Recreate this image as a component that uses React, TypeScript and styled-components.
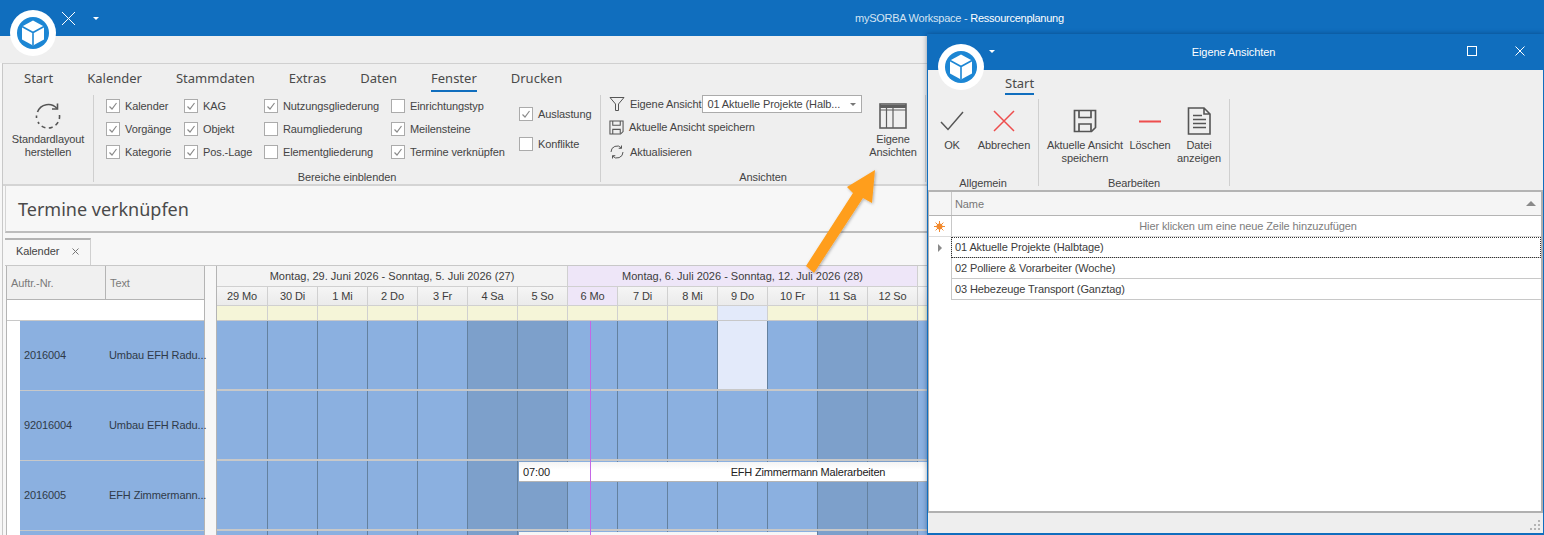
import React from "react"
import styled, { createGlobalStyle } from "styled-components"

const GlobalStyle = createGlobalStyle`
  html, body {
    margin: 0;
    padding: 0;
    background: #f7f7f7;
  }
  * {
    box-sizing: border-box;
  }
`

const Screen = styled.div`
  position: relative;
  width: 1544px;
  height: 535px;
  overflow: hidden;
  background: #f7f7f7;
  color: #444;
  font-family: "Liberation Sans", Arial, sans-serif;
  font-size: 11px;
  letter-spacing: -0.1px;
`

const TitleBar = styled.div`
  display: flex;
  align-items: center;
  height: 36px;
  padding-left: 61px;
  background: #106ebe;
  color: #fff;
`

const QuickButtons = styled.div`
  display: flex;
  align-items: center;
  gap: 17px;
`

const Caret = styled.span<{ $color?: string }>`
  width: 0;
  height: 0;
  border-left: 3.5px solid transparent;
  border-right: 3.5px solid transparent;
  border-top: 3.5px solid ${(p) => p.$color || "#fff"};
`

const AppTitle = styled.div`
  margin-left: 756px;
  white-space: nowrap;
  letter-spacing: -0.25px;
  color: #d4e4f3;
`

const AppTitleStrong = styled.span`
  color: #fff;
`

const LogoBadge = styled.div<{ $left: number; $top: number }>`
  position: absolute;
  left: ${(p) => p.$left}px;
  top: ${(p) => p.$top}px;
  width: 46px;
  height: 46px;
`

const Workspace = styled.div`
  border-left: 2px solid #f7f7f7;
`

const LogoStrip = styled.div`
  height: 27px;
  margin-left: -2px;
  background: #efefef;
`

const Frame = styled.div`
  border-left: 1px solid #c8c8c8;
  border-top: 1px solid #d0d0d0;
  padding-left: 2px;
`

const Ribbon = styled.div`
  height: 122px;
  margin-left: -2px;
  background: #efefef;
  border-bottom: 2px solid #d4d4d4;
`

const TabRow = styled.div`
  display: flex;
  gap: 34px;
  height: 29px;
  padding: 5px 0 0 21px;
  font-family: "Noto Sans", sans-serif;
  font-size: 13px;
  letter-spacing: 0;
  color: #4a4a4a;
`

const RibbonTab = styled.div<{ $active?: boolean }>`
  height: 23px;
  line-height: 19px;
  border-bottom: ${(p) => (p.$active ? "2px solid #106ebe" : "none")};
`

const RibbonBody = styled.div`
  display: flex;
  height: 89px;
`

const Group = styled.div<{ $width: number }>`
  display: flex;
  flex-direction: column;
  width: ${(p) => p.$width}px;
  height: 87px;
  margin-top: 2px;
  border-right: 1px solid #cfcfcf;
`

const GroupContent = styled.div<{ $pad?: number }>`
  display: flex;
  flex: none;
  height: 76px;
  padding-left: ${(p) => p.$pad || 0}px;
`

const GroupCaption = styled.div`
  height: 11px;
  text-align: center;
  line-height: 13px;
`

const BigButton = styled.div<{ $width: number }>`
  display: flex;
  flex-direction: column;
  align-items: center;
  width: ${(p) => p.$width}px;
  padding-top: 4px;
  line-height: 13px;
  text-align: center;
`

const BigIcon = styled.div<{ $height: number }>`
  display: flex;
  align-items: center;
  justify-content: center;
  height: ${(p) => p.$height}px;
`

const CheckColumn = styled.div<{ $width: number; $gap: number; $top: number }>`
  display: flex;
  flex-direction: column;
  gap: ${(p) => p.$gap}px;
  width: ${(p) => p.$width}px;
  padding-top: ${(p) => p.$top}px;
`

const CheckRow = styled.div`
  display: flex;
  align-items: center;
  gap: 5px;
  height: 14px;
  white-space: nowrap;
`

const Box = styled.span`
  display: flex;
  align-items: center;
  justify-content: center;
  width: 14px;
  height: 14px;
  background: #fff;
  border: 1px solid #ababab;
`

const ViewColumn = styled.div`
  display: flex;
  flex-direction: column;
  width: 262px;
  padding-left: 8px;
`

const ViewRow = styled.div<{ $height: number }>`
  display: flex;
  align-items: center;
  gap: 5px;
  height: ${(p) => p.$height}px;
  white-space: nowrap;
`

const Combo = styled.div`
  display: flex;
  align-items: center;
  justify-content: space-between;
  width: 160px;
  height: 18px;
  margin-left: -4px;
  padding: 0 5px 0 4px;
  background: #fff;
  border: 1px solid #ababab;
`

const Heading = styled.div`
  display: flex;
  align-items: center;
  height: 47px;
  padding-left: 12px;
  background: #f7f7f7;
  border-bottom: 2px solid #bdbdbd;
  border-left: 1px solid #d4d4d4;
  font-family: "Noto Sans", sans-serif;
  font-size: 18px;
  letter-spacing: 0;
  color: #4a4a4a;
`

const DocTabs = styled.div`
  display: flex;
  align-items: flex-end;
  height: 32px;
`

const DocTab = styled.div`
  display: flex;
  align-items: center;
  justify-content: space-between;
  width: 86px;
  height: 27px;
  padding: 0 11px 3px 11px;
  background: #f7f7f7;
  border-top: 2px solid #b4b4b4;
  border-right: 1px solid #d0d0d0;
`

const CalendarArea = styled.div`
  display: flex;
  gap: 11px;
  padding-left: 1px;
  border-top: 1px solid #c8c8c8;
`

const LeftTable = styled.div`
  width: 199px;
  flex: none;
  border-left: 1px solid #b4b4b4;
  border-right: 1px solid #b4b4b4;
`

const LeftHead = styled.div`
  display: grid;
  grid-template-columns: 98px 1fr;
  height: 34px;
  background: #f0f0f0;
  border-bottom: 1px solid #b4b4b4;
  color: #7a7a7a;
`

const LeftHeadCell = styled.div`
  display: flex;
  align-items: center;
  padding-left: 4px;
  & + & {
    border-left: 1px solid #b4b4b4;
  }
`

const LeftBlank = styled.div`
  height: 21px;
  background: #fff;
  border-bottom: 1px solid #c8c8c8;
`

const LeftRow = styled.div`
  display: grid;
  grid-template-columns: 85px 1fr;
  align-items: center;
  height: 70px;
  margin-left: 13px;
  padding: 0 0 2px 4px;
  background: #8bb0e0;
  border-bottom: 1px solid #c8c8c8;
  color: #2f3a48;
  box-shadow: -13px 0 0 #fff;
  white-space: nowrap;
`

const Gantt = styled.div`
  flex: none;
  width: 761px;
  border-left: 1px solid #b4b4b4;
`

const WeekRow = styled.div`
  display: grid;
  grid-template-columns: 351px 350px 60px;
  height: 21px;
`

const WeekCell = styled.div<{ $active?: boolean }>`
  display: flex;
  align-items: center;
  justify-content: center;
  background: ${(p) => (p.$active ? "#eee6f8" : "#f3f3f3")};
  border-bottom: 1px solid #d0d0d0;
  border-right: 1px solid #d0d0d0;
  color: #3c3c3c;
  letter-spacing: 0;
  white-space: nowrap;
`

const DayGrid = styled.div`
  display: grid;
  grid-template-columns: 51px repeat(14, 50px);
`

const DayCell = styled.div<{ $active?: boolean }>`
  display: flex;
  align-items: center;
  justify-content: center;
  height: 19px;
  background: ${(p) =>
    p.$active ? "#eee6f8" : "linear-gradient(#f5f5f5, #ebebeb)"};
  border-right: 1px solid #d0d0d0;
  border-bottom: 1px solid #d0d0d0;
  color: #3c3c3c;
`

const StripCell = styled.div<{ $today?: boolean }>`
  height: 15px;
  background: ${(p) => (p.$today ? "#e3eafa" : "#f5f5d8")};
  border-right: 1px solid #d0d0d0;
  border-bottom: 1px solid #c8c8c8;
`

const GanttRow = styled.div`
  position: relative;
  display: grid;
  grid-template-columns: 51px repeat(14, 50px);
  height: 70px;
  border-bottom: 2px solid #c8c8c8;
`

const GanttCell = styled.div<{ $weekend?: boolean; $today?: boolean }>`
  background: ${(p) =>
    p.$today ? "#e3eafa" : p.$weekend ? "#7da0cb" : "#8bb0e0"};
  border-right: 1px solid #64819f;
`

const NowLine = styled.div`
  position: absolute;
  top: 0;
  bottom: -2px;
  left: 373px;
  width: 1px;
  background: #c467e6;
  z-index: 2;
`

const Appointment = styled.div<{ $width: number }>`
  position: absolute;
  left: 302px;
  top: 1px;
  display: grid;
  grid-template-columns: 60px 1fr 60px;
  align-items: center;
  width: ${(p) => p.$width}px;
  height: 20px;
  padding-left: 4px;
  background: linear-gradient(#f4f4f4, #fff 40%);
  border-bottom: 1px solid #b4b4b4;
  color: #222;
  z-index: 1;
`

const AppointmentTitle = styled.span`
  text-align: center;
  white-space: nowrap;
  letter-spacing: -0.2px;
`

const ArrowLayer = styled.svg`
  position: absolute;
  left: 790px;
  top: 160px;
  z-index: 5;
`

const DialogWindow = styled.div`
  position: absolute;
  left: 927px;
  top: 34px;
  width: 617px;
  height: 501px;
  display: flex;
  flex-direction: column;
  background: #fff;
  border-left: 1px solid #106ebe;
  border-right: 1px solid #106ebe;
  border-bottom: 2px solid #106ebe;
  box-shadow: 0 0 5px rgba(0, 30, 70, 0.45);
  z-index: 6;
`

const DialogTitle = styled.div`
  position: relative;
  display: flex;
  align-items: center;
  justify-content: center;
  height: 36px;
  padding-right: 4px;
  background: #106ebe;
  color: #fff;
  flex: none;
`

const DialogControl = styled.div<{ $right: number }>`
  position: absolute;
  right: ${(p) => p.$right}px;
  top: 12px;
  display: flex;
`

const DialogQuickCaret = styled.div`
  position: absolute;
  left: 61px;
  top: 16px;
  display: flex;
`

const DialogRibbon = styled.div`
  height: 122px;
  flex: none;
  background: #efefef;
  border-bottom: 2px solid #b4b4b4;
`

const DialogTabRow = styled.div`
  height: 25px;
  padding: 4px 0 0 77px;
  font-family: "Noto Sans", sans-serif;
  font-size: 13px;
  letter-spacing: 0;
`

const DialogTab = styled.div`
  display: inline-block;
  height: 21px;
  line-height: 19px;
  border-bottom: 2px solid #106ebe;
  color: #4a4a4a;
`

const DialogGroups = styled.div`
  display: flex;
  height: 87px;
  margin-top: 4px;
`

const DialogGroup = styled.div<{ $width: number }>`
  display: flex;
  flex-direction: column;
  width: ${(p) => p.$width}px;
  border-right: 1px solid #cfcfcf;
`

const DialogButtons = styled.div<{ $pad?: number }>`
  display: flex;
  flex: none;
  height: 78px;
  padding-left: ${(p) => p.$pad || 0}px;
`

const DialogCaption = styled.div`
  height: 9px;
  text-align: center;
  line-height: 13px;
`

const GridPane = styled.div`
  display: flex;
  flex-direction: column;
  flex: 1;
  background: #fff;
  border-left: 1px solid #b0b0b0;
  border-right: 2px solid #b0b0b0;
  border-bottom: 2px solid #b0b0b0;
`

const DialogHead = styled.div`
  display: grid;
  grid-template-columns: 22px 1fr;
  height: 24px;
  flex: none;
  background: #f5f5f5;
  border-bottom: 1px solid #b4b4b4;
  color: #777;
`

const HeadCell = styled.div`
  position: relative;
  display: flex;
  align-items: center;
  padding-left: 3px;
  border-left: 1px solid #c8c8c8;
  &:first-child {
    border-left: none;
  }
`

const SortMark = styled.span`
  position: absolute;
  right: 5px;
  top: 9px;
  border-left: 5px solid transparent;
  border-right: 5px solid transparent;
  border-bottom: 5px solid #8a8a8a;
`

const DialogRow = styled.div<{ $hint?: boolean }>`
  display: grid;
  grid-template-columns: 22px 1fr;
  height: 21px;
  flex: none;
  border-bottom: ${(p) => (p.$hint ? "1px solid #dcdcdc" : "none")};
  color: ${(p) => (p.$hint ? "#7d7d7d" : "#3c3c3c")};
`

const RowMark = styled.div`
  display: flex;
  align-items: center;
  justify-content: center;
  padding-right: 1px;
`

const RowPointer = styled.span`
  border-top: 4px solid transparent;
  border-bottom: 4px solid transparent;
  border-left: 4px solid #8a8a8a;
`

const RowText = styled.div<{ $focus?: boolean; $hint?: boolean }>`
  display: flex;
  align-items: center;
  justify-content: ${(p) => (p.$hint ? "center" : "flex-start")};
  padding: 0 0 ${(p) => (p.$focus ? 1 : 0)}px 3px;
  border-left: 1px solid #c8c8c8;
  border-bottom: ${(p) => (p.$hint ? "none" : "1px solid #c8c8c8")};
  outline: ${(p) => (p.$focus ? "1px dotted #333" : "none")};
  outline-offset: -1px;
  white-space: nowrap;
`

const StatusBar = styled.div`
  position: relative;
  height: 20px;
  flex: none;
  background: #eeeeee;
`

const Grip = styled.svg`
  position: absolute;
  right: 3px;
  bottom: 3px;
`

const Logo = () => (
  <svg width="46" height="46" viewBox="0 0 46 46">
    <circle cx="23" cy="23" r="23" fill="#fff" />
    <circle cx="23" cy="23" r="16" fill="#1c86d4" />
    <path d="M23 10.5 34 16.5 V29.5 L23 35.5 12 29.5 V16.5 Z" fill="#fff" />
    <path
      d="M12 16.5 23 22.5 34 16.5 M23 22.5 V35.5"
      fill="none"
      stroke="#1c86d4"
      strokeWidth="1.6"
    />
  </svg>
)

const Tick = () => (
  <svg width="10" height="10" viewBox="0 0 10 10">
    <path d="M1.5 5.5 4 8 8.5 2" fill="none" stroke="#8a8a8a" strokeWidth="1.2" />
  </svg>
)

const Check = ({ label, on }: { label: string; on?: boolean }) => (
  <CheckRow>
    <Box>{on && <Tick />}</Box>
    {label}
  </CheckRow>
)

const FloppyIcon = ({ size }: { size: number }) => (
  <svg width={size} height={size} viewBox="0 0 24 24" fill="none" stroke="#555" strokeWidth="1.7">
    <path d="M1.5 1.5 H22.5 V18.5 L18.5 22.5 H1.5 Z" />
    <path d="M6 1.5 V8.5 H18 V1.5 M6 22.5 V15 H18 V22" />
  </svg>
)

const SyncIcon = () => (
  <svg width="16" height="16" viewBox="0 0 16 16" fill="none" stroke="#555" strokeWidth="1">
    <path d="M2 8 A6 6 0 0 1 12.5 4 M12.5 1.5 V4.3 H9.7" />
    <path d="M14 8 A6 6 0 0 1 3.5 12 M3.5 14.5 V11.7 H6.3" />
  </svg>
)

const LayoutIcon = () => (
  <svg width="28" height="26" viewBox="0 0 28 26" fill="none" stroke="#5e5e5e">
    <rect x="1" y="1" width="26" height="24" strokeWidth="1.6" />
    <path d="M1 3.5 H27" strokeWidth="3" />
    <path d="M1 7 H27 M7.5 5 V25 M14 5 V25" strokeWidth="1.2" />
  </svg>
)

const days = [
  "29 Mo", "30 Di", "1 Mi", "2 Do", "3 Fr", "4 Sa", "5 So",
  "6 Mo", "7 Di", "8 Mi", "9 Do", "10 Fr", "11 Sa", "12 So", "",
]
const dayFlags = days.map((_, i) => i === 5 || i === 6 || i === 12 || i === 13)

const rows = [
  { nr: "2016004", text: "Umbau EFH Radu..." },
  { nr: "92016004", text: "Umbau EFH Radu..." },
  { nr: "2016005", text: "EFH Zimmermann..." },
  { nr: "", text: "" },
]

const columnOne = [
  { label: "Kalender", on: true },
  { label: "Vorgänge", on: true },
  { label: "Kategorie", on: true },
]
const columnTwo = [
  { label: "KAG", on: true },
  { label: "Objekt", on: true },
  { label: "Pos.-Lage", on: true },
]
const columnThree = [
  { label: "Nutzungsgliederung", on: true },
  { label: "Raumgliederung" },
  { label: "Elementgliederung" },
]
const columnFour = [
  { label: "Einrichtungstyp" },
  { label: "Meilensteine", on: true },
  { label: "Termine verknüpfen", on: true },
]

const checkColumns = [
  { width: 78, items: columnOne },
  { width: 80, items: columnTwo },
  { width: 127, items: columnThree },
  { width: 128, items: columnFour },
]

const App = () => (
  <Screen>
    <GlobalStyle />
    <TitleBar>
      <QuickButtons>
        <svg width="15" height="15" viewBox="0 0 15 15">
          <path d="M1 1 14 14 M14 1 1 14" stroke="#fff" strokeWidth="1" />
        </svg>
        <Caret />
      </QuickButtons>
      <AppTitle>
        mySORBA Workspace - <AppTitleStrong>Ressourcenplanung</AppTitleStrong>
      </AppTitle>
    </TitleBar>
    <LogoBadge $left={10} $top={10}>
      <Logo />
    </LogoBadge>

    <Workspace>
      <LogoStrip />
      <Frame>
        <Ribbon>
          <TabRow>
            <RibbonTab>Start</RibbonTab>
            <RibbonTab>Kalender</RibbonTab>
            <RibbonTab>Stammdaten</RibbonTab>
            <RibbonTab>Extras</RibbonTab>
            <RibbonTab>Daten</RibbonTab>
            <RibbonTab $active>Fenster</RibbonTab>
            <RibbonTab>Drucken</RibbonTab>
          </TabRow>
          <RibbonBody>
            <Group $width={91}>
              <GroupContent>
                <BigButton $width={90}>
                  <BigIcon $height={34}>
                    <svg width="30" height="30" viewBox="0 0 30 30" fill="none" stroke="#555" strokeWidth="1.6">
                      <path d="M4.5 11 A11.5 11.5 0 0 1 24 7.5" />
                      <path d="M24.5 2.5 V8 H19" />
                      <path d="M26.5 14 A11.5 11.5 0 0 1 5 21" strokeDasharray="4 3.4" />
                      <path d="M3.5 14.5 V17" />
                    </svg>
                  </BigIcon>
                  <span>
                    Standardlayout
                    <br />
                    herstellen
                  </span>
                </BigButton>
              </GroupContent>
            </Group>
            <Group $width={507}>
              <GroupContent $pad={12}>
                {checkColumns.map((col) => (
                  <CheckColumn key={col.items[0].label} $width={col.width} $gap={9} $top={4}>
                    {col.items.map((item) => (
                      <Check key={item.label} label={item.label} on={item.on} />
                    ))}
                  </CheckColumn>
                ))}
                <CheckColumn $width={80} $gap={16} $top={12}>
                  <Check label="Auslastung" on />
                  <Check label="Konflikte" />
                </CheckColumn>
              </GroupContent>
              <GroupCaption>Bereiche einblenden</GroupCaption>
            </Group>
            <Group $width={325}>
              <GroupContent>
                <ViewColumn>
                  <ViewRow $height={18}>
                    <svg width="16" height="16" viewBox="0 0 16 16" fill="none" stroke="#555">
                      <path d="M1 1.5 H15 L9.5 8 V14.5 H6.5 V8 Z" />
                    </svg>
                    Eigene Ansicht
                    <Combo>
                      01 Aktuelle Projekte (Halb...
                      <Caret $color="#777" />
                    </Combo>
                  </ViewRow>
                  <ViewRow $height={28}>
                    <FloppyIcon size={15} />
                    Aktuelle Ansicht speichern
                  </ViewRow>
                  <ViewRow $height={22}>
                    <SyncIcon />
                    Aktualisieren
                  </ViewRow>
                </ViewColumn>
                <BigButton $width={60}>
                  <BigIcon $height={34}>
                    <LayoutIcon />
                  </BigIcon>
                  <span>
                    Eigene
                    <br />
                    Ansichten
                  </span>
                </BigButton>
              </GroupContent>
              <GroupCaption>Ansichten</GroupCaption>
            </Group>
          </RibbonBody>
        </Ribbon>
        <Heading>Termine verknüpfen</Heading>
        <DocTabs>
          <DocTab>
            Kalender
            <svg width="7" height="7" viewBox="0 0 7 7">
              <path d="M0.5 0.5 6.5 6.5 M6.5 0.5 0.5 6.5" stroke="#777" />
            </svg>
          </DocTab>
        </DocTabs>
        <CalendarArea>
          <LeftTable>
            <LeftHead>
              <LeftHeadCell>Auftr.-Nr.</LeftHeadCell>
              <LeftHeadCell>Text</LeftHeadCell>
            </LeftHead>
            <LeftBlank />
            {rows.map((row) => (
              <LeftRow key={row.nr || "last"}>
                <span>{row.nr}</span>
                <span>{row.text}</span>
              </LeftRow>
            ))}
          </LeftTable>
          <Gantt>
            <WeekRow>
              <WeekCell>Montag, 29. Juni 2026 - Sonntag, 5. Juli 2026 (27)</WeekCell>
              <WeekCell $active>Montag, 6. Juli 2026 - Sonntag, 12. Juli 2026 (28)</WeekCell>
              <WeekCell />
            </WeekRow>
            <DayGrid>
              {days.map((d, i) => (
                <DayCell key={i} $active={i === 7}>
                  {d}
                </DayCell>
              ))}
              {days.map((_, i) => (
                <StripCell key={i} $today={i === 10} />
              ))}
            </DayGrid>
            {rows.map((row, r) => (
              <GanttRow key={r}>
                {days.map((_, i) => (
                  <GanttCell key={i} $weekend={dayFlags[i]} $today={r === 0 && i === 10} />
                ))}
                <NowLine />
                {r === 2 && (
                  <Appointment $width={574}>
                    <span>07:00</span>
                    <AppointmentTitle>EFH Zimmermann Malerarbeiten</AppointmentTitle>
                  </Appointment>
                )}
                {r === 3 && <Appointment $width={298} />}
              </GanttRow>
            ))}
          </Gantt>
        </CalendarArea>
      </Frame>
    </Workspace>

    <ArrowLayer width="100" height="150" viewBox="0 0 100 150">
      <defs>
        <filter id="arrowShadow" x="-20%" y="-20%" width="140%" height="140%">
          <feDropShadow dx="1" dy="1" stdDeviation="1.5" floodColor="#000" floodOpacity="0.3" />
        </filter>
      </defs>
      <path
        d="M85 10 L82 43 L73 38 L24 113 L16 106 L63 33 L57 27 Z"
        fill="#ff9e1b"
        filter="url(#arrowShadow)"
      />
    </ArrowLayer>

    <DialogWindow>
      <DialogTitle>
        Eigene Ansichten
        <DialogQuickCaret>
          <Caret />
        </DialogQuickCaret>
        <DialogControl $right={66}>
          <svg width="10" height="10" viewBox="0 0 10 10">
            <rect x="0.5" y="0.5" width="9" height="9" fill="none" stroke="#fff" />
          </svg>
        </DialogControl>
        <DialogControl $right={18}>
          <svg width="10" height="10" viewBox="0 0 10 10">
            <path d="M0.5 0.5 9.5 9.5 M9.5 0.5 0.5 9.5" stroke="#fff" />
          </svg>
        </DialogControl>
      </DialogTitle>
      <LogoBadge $left={10} $top={10}>
        <Logo />
      </LogoBadge>
      <DialogRibbon>
        <DialogTabRow>
          <DialogTab>Start</DialogTab>
        </DialogTabRow>
        <DialogGroups>
          <DialogGroup $width={111}>
            <DialogButtons>
              <BigButton $width={48}>
                <BigIcon $height={36}>
                  <svg width="24" height="20" viewBox="0 0 24 20" fill="none" stroke="#555" strokeWidth="1.5">
                    <path d="M1 11 8 18.5 23 1" />
                  </svg>
                </BigIcon>
                <span>OK</span>
              </BigButton>
              <BigButton $width={56}>
                <BigIcon $height={36}>
                  <svg width="22" height="22" viewBox="0 0 22 22" fill="none" stroke="#ee4d4d" strokeWidth="1.5">
                    <path d="M1 1 21 21 M21 1 1 21" />
                  </svg>
                </BigIcon>
                <span>Abbrechen</span>
              </BigButton>
            </DialogButtons>
            <DialogCaption>Allgemein</DialogCaption>
          </DialogGroup>
          <DialogGroup $width={191}>
            <DialogButtons $pad={4}>
              <BigButton $width={84}>
                <BigIcon $height={36}>
                  <FloppyIcon size={24} />
                </BigIcon>
                <span>
                  Aktuelle Ansicht
                  <br />
                  speichern
                </span>
              </BigButton>
              <BigButton $width={46}>
                <BigIcon $height={36}>
                  <svg width="22" height="3" viewBox="0 0 22 3">
                    <rect width="22" height="2" y="0.5" fill="#ee4d4d" />
                  </svg>
                </BigIcon>
                <span>Löschen</span>
              </BigButton>
              <BigButton $width={52}>
                <BigIcon $height={36}>
                  <svg width="24" height="28" viewBox="0 0 24 28" fill="none" stroke="#555" strokeWidth="1.6">
                    <path d="M1.5 1 H17 L23 7 V27 H1.5 Z M17 1 V7 H23" />
                    <path d="M6 8.5 H15 M6 12.5 H19 M6 16.5 H19 M6 20.5 H19" strokeWidth="1.5" />
                  </svg>
                </BigIcon>
                <span>
                  Datei
                  <br />
                  anzeigen
                </span>
              </BigButton>
            </DialogButtons>
            <DialogCaption>Bearbeiten</DialogCaption>
          </DialogGroup>
        </DialogGroups>
      </DialogRibbon>
      <GridPane>
        <DialogHead>
          <HeadCell />
          <HeadCell>
            Name
            <SortMark />
          </HeadCell>
        </DialogHead>
        <DialogRow $hint>
          <RowMark>
            <svg width="11" height="11" viewBox="0 0 11 11">
              <circle cx="5.5" cy="5.5" r="3" fill="#f28a2e" />
              <path d="M5.5 0 V11 M0 5.5 H11 M1.6 1.6 9.4 9.4 M9.4 1.6 1.6 9.4" stroke="#f28a2e" />
            </svg>
          </RowMark>
          <RowText $hint>Hier klicken um eine neue Zeile hinzuzufügen</RowText>
        </DialogRow>
        <DialogRow>
          <RowMark>
            <RowPointer />
          </RowMark>
          <RowText $focus>01 Aktuelle Projekte (Halbtage)</RowText>
        </DialogRow>
        <DialogRow>
          <RowMark />
          <RowText>02 Polliere &amp; Vorarbeiter (Woche)</RowText>
        </DialogRow>
        <DialogRow>
          <RowMark />
          <RowText>03 Hebezeuge Transport (Ganztag)</RowText>
        </DialogRow>
      </GridPane>
      <StatusBar>
        <Grip width="11" height="11" viewBox="0 0 11 11">
          <path d="M9 1h2v2H9zM5 5h2v2H5zM9 5h2v2H9zM1 9h2v2H1zM5 9h2v2H5zM9 9h2v2H9z" fill="#b4b4b4" />
        </Grip>
      </StatusBar>
    </DialogWindow>
  </Screen>
)

export default App
